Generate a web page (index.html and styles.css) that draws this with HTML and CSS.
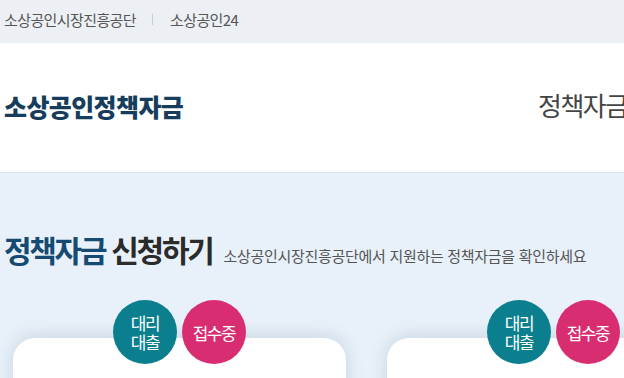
FILE: index.html
```html
<!DOCTYPE html>
<html lang="ko">
<head>
<meta charset="utf-8">
<title>소상공인정책자금</title>
<link rel="stylesheet" href="styles.css">
</head>
<body>
<div class="topbar">
  <a class="toplink">소상공인시장진흥공단</a>
  <span class="sep"></span>
  <a class="toplink">소상공인24</a>
</div>
<header class="header">
  <h1 class="logo">소상공인정책자금</h1>
  <nav class="nav"><a class="nav-item">정책자금</a></nav>
</header>
<main class="main">
  <div class="title-row">
    <h2 class="title"><span class="title-accent">정책자금</span> 신청하기</h2>
    <p class="subtitle">소상공인시장진흥공단에서 지원하는 정책자금을 확인하세요</p>
  </div>
  <div class="cards">
    <div class="card">
      <div class="badges">
        <span class="badge badge-teal"><span class="badge-line">대리</span><span class="badge-line">대출</span></span>
        <span class="badge badge-pink">접수중</span>
      </div>
    </div>
    <div class="card">
      <div class="badges">
        <span class="badge badge-teal"><span class="badge-line">대리</span><span class="badge-line">대출</span></span>
        <span class="badge badge-pink">접수중</span>
      </div>
    </div>
  </div>
</main>
</body>
</html>
```

FILE: styles.css
```css
* { box-sizing: border-box; }
html, body {
  margin: 0;
  padding: 0;
  width: 624px;
  height: 378px;
  overflow: hidden;
  font-family: "Noto Sans CJK KR", "Noto Sans", sans-serif;
}
.topbar {
  height: 43px;
  background: #ecf0f4;
  display: flex;
  align-items: center;
  padding-left: 4px;
  padding-bottom: 4px;
}
.toplink {
  font-size: 15px;
  letter-spacing: -0.6px;
  color: #555;
  line-height: 1;
}
.sep {
  width: 1px;
  height: 11px;
  background: #c9ced4;
  margin: 0 17px 0 16px;
}
.header {
  height: 130px;
  background: #fff;
  border-bottom: 1px solid #dfe3e7;
  display: flex;
  align-items: center;
  justify-content: space-between;
  padding-left: 4px;
  padding-bottom: 2px;
}
.logo {
  margin: 0;
  font-size: 25px;
  font-weight: 900;
  letter-spacing: -0.6px;
  color: #163e5c;
  line-height: 1;
}
.nav {
  width: 86px;
  white-space: nowrap;
}
.nav-item {
  font-size: 26px;
  letter-spacing: -1.5px;
  color: #444;
  line-height: 1;
}
.main {
  background: #e8f1f9;
  height: 205px;
  padding-top: 56px;
}
.title-row {
  display: flex;
  align-items: baseline;
  padding-left: 4px;
}
.title {
  margin: 0;
  font-size: 30px;
  font-weight: 700;
  letter-spacing: -2.3px;
  color: #2b2b2b;
  line-height: 40px;
}
.title-accent { color: #154a72; }
.subtitle {
  margin: 0 0 0 11px;
  font-size: 15px;
  letter-spacing: -0.3px;
  color: #555;
}
.cards {
  display: flex;
  gap: 41px;
  padding-left: 13px;
  margin-top: 69px;
}
.card {
  position: relative;
  flex: 0 0 333px;
  height: 120px;
  background: #fff;
  border-radius: 22px;
  box-shadow: 0 -2px 18px rgba(60, 90, 120, 0.18);
}
.badges {
  position: absolute;
  left: 100px;
  top: -38px;
  display: flex;
  gap: 5px;
}
.badge {
  width: 64px;
  height: 64px;
  border-radius: 50%;
  display: flex;
  flex-direction: column;
  align-items: center;
  justify-content: center;
  text-align: center;
  color: #fff;
  font-size: 17px;
  letter-spacing: -1.4px;
  line-height: 19px;
}
.badge-line {
  display: block;
  height: 19px;
}
.badge-teal { background: #0b7f8e; }
.badge-pink { background: #d92d71; }
```
